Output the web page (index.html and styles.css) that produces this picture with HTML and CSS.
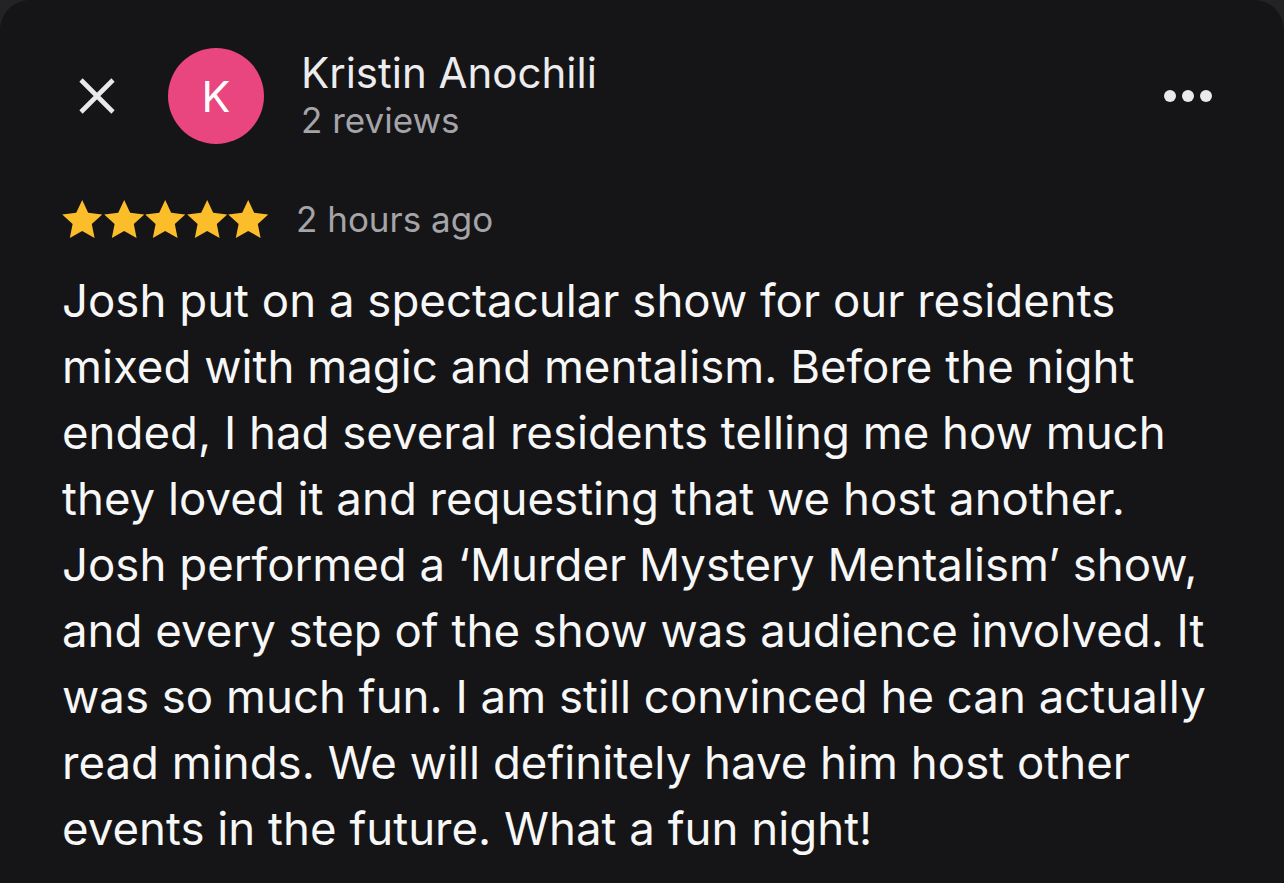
FILE: index.html
```html
<!DOCTYPE html>
<html>
<head>
<meta charset="utf-8">
<link rel="stylesheet" href="styles.css">
</head>
<body>
<div class="card">
  <header class="head">
    <svg class="close" viewBox="0 0 38 38" width="38" height="38"><path d="M3 3 L35 35 M35 3 L3 35" stroke="#e9e9ea" stroke-width="4.6" stroke-linecap="butt" fill="none"/></svg>
    <div class="avatar">K</div>
    <div class="who">
      <div class="name">Kristin Anochili</div>
      <div class="count">2 reviews</div>
    </div>
    <div class="more"><span></span><span></span><span></span></div>
  </header>
  <div class="meta">
    <div class="stars">
      <svg viewBox="2 2.2 19.8 18.8" width="40" height="38"><path d="M12 2.2l2.95 6.35 6.95.8-5.15 4.75 1.38 6.86L12 17.5l-6.13 3.46 1.38-6.86L2.1 9.35l6.95-.8z"/></svg>
      <svg viewBox="2 2.2 19.8 18.8" width="40" height="38"><path d="M12 2.2l2.95 6.35 6.95.8-5.15 4.75 1.38 6.86L12 17.5l-6.13 3.46 1.38-6.86L2.1 9.35l6.95-.8z"/></svg>
      <svg viewBox="2 2.2 19.8 18.8" width="40" height="38"><path d="M12 2.2l2.95 6.35 6.95.8-5.15 4.75 1.38 6.86L12 17.5l-6.13 3.46 1.38-6.86L2.1 9.35l6.95-.8z"/></svg>
      <svg viewBox="2 2.2 19.8 18.8" width="40" height="38"><path d="M12 2.2l2.95 6.35 6.95.8-5.15 4.75 1.38 6.86L12 17.5l-6.13 3.46 1.38-6.86L2.1 9.35l6.95-.8z"/></svg>
      <svg viewBox="2 2.2 19.8 18.8" width="40" height="38"><path d="M12 2.2l2.95 6.35 6.95.8-5.15 4.75 1.38 6.86L12 17.5l-6.13 3.46 1.38-6.86L2.1 9.35l6.95-.8z"/></svg>
    </div>
    <span class="when">2 hours ago</span>
  </div>
  <p class="body">Josh put on a spectacular show for our residents<br>mixed with magic and mentalism. Before the night<br>ended, I had several residents telling me how much<br>they loved it and requesting that we host another.<br>Josh performed a ‘Murder Mystery Mentalism’ show,<br>and every step of the show was audience involved. It<br>was so much fun. I am still convinced he can actually<br>read minds. We will definitely have him host other<br>events in the future. What a fun night!</p>
</div>
</body>
</html>
```
FILE: styles.css
```css
html, body {
  margin: 0;
  padding: 0;
  background: #232326;
}
.card {
  width: 1284px;
  height: 883px;
  background: #151517;
  border-radius: 30px 30px 0 0;
  overflow: hidden;
  font-family: Inter, "Noto Sans", sans-serif;
  color: #f2f2f3;
}
.head {
  display: flex;
  align-items: center;
  height: 96px;
  padding: 48px 72px 0 78px;
}
.close {
  flex: none;
  margin-right: 52px;
}
.avatar {
  flex: none;
  width: 96px;
  height: 96px;
  border-radius: 50%;
  background: #e9457f;
  color: #fff;
  display: flex;
  align-items: center;
  justify-content: center;
  font-size: 43px;
  font-weight: 400;
  margin-right: 37px;
}
.who {
  flex: 1;
  display: flex;
  flex-direction: column;
  margin-top: 0;
}
.name {
  font-size: 42px;
  line-height: 48px;
  color: #ececee;
}
.count {
  font-size: 35px;
  line-height: 46px;
  color: #a4a4a9;
}
.more {
  display: flex;
  gap: 6px;
}
.more span {
  width: 12px;
  height: 12px;
  border-radius: 50%;
  background: #e9e9ea;
}
.meta {
  display: flex;
  align-items: center;
  margin: 55px 0 0 62px;
  height: 40px;
}
.stars {
  display: flex;
  gap: 1.5px;
  fill: #fcbd2b;
  margin-right: 28px;
}
.when {
  font-size: 35px;
  color: #a4a4a9;
}
.body {
  margin: 29px 0 0 62px;
  font-size: 45.6px;
  line-height: 66px;
  color: #f7f7f8;
}
```
